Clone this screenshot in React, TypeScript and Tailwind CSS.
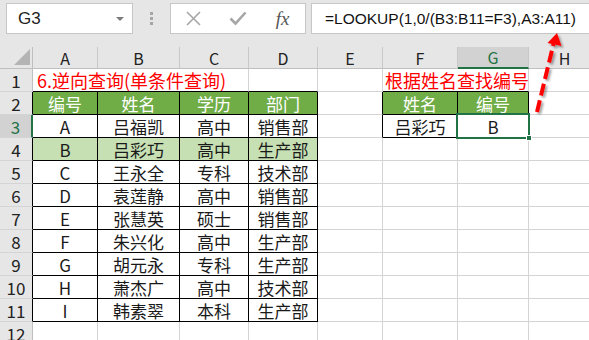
import type { ReactNode } from 'react'

type Edge = 'g' | 'k' | 'n'

const R: Record<Edge, string> = {
  g: 'border-r border-r-[#d4d4d4]',
  k: 'border-r border-r-black',
  n: '',
}
const B: Record<Edge, string> = {
  g: 'border-b border-b-[#d4d4d4]',
  k: 'border-b border-b-black',
  n: '',
}

function Cell({
  r = 'g',
  b = 'g',
  className = '',
  children,
}: {
  r?: Edge
  b?: Edge
  className?: string
  children?: ReactNode
}) {
  return (
    <div
      className={`box-border flex items-center justify-center whitespace-nowrap text-[17px] leading-none ${R[r]} ${B[b]} ${className}`}
    >
      {children}
    </div>
  )
}

function RowHead({ n, active = false, edge = 'g' }: { n: number; active?: boolean; edge?: Edge }) {
  if (active) {
    return (
      <div className="box-border flex items-center justify-center border-b border-b-[#d4d4d4] border-r-2 border-r-[#217346] bg-[#d2d2d2] text-[17px] leading-none text-[#217346]">
        {n}
      </div>
    )
  }
  return (
    <div
      className={`box-border flex items-center justify-center border-b border-b-[#d4d4d4] bg-[#e6e6e6] text-[17px] leading-none text-[#222] ${
        edge === 'k' ? 'border-r border-r-black' : 'border-r border-r-[#bfbfbf]'
      }`}
    >
      {n}
    </div>
  )
}

const people = [
  ['A', '吕福凯', '高中', '销售部'],
  ['B', '吕彩巧', '高中', '生产部'],
  ['C', '王永全', '专科', '技术部'],
  ['D', '袁莲静', '高中', '销售部'],
  ['E', '张慧英', '硕士', '销售部'],
  ['F', '朱兴化', '高中', '生产部'],
  ['G', '胡元永', '专科', '生产部'],
  ['H', '萧杰广', '高中', '技术部'],
  ['I', '韩素翠', '本科', '生产部'],
]

const letters = ['A', 'B', 'C', 'D', 'E', 'F', 'G', 'H']

export default function App() {
  return (
    <div className="relative h-[340px] w-[589px] overflow-hidden bg-white font-['Noto_Sans_CJK_SC',sans-serif] text-[#1a1a1a]">
      {/* formula bar */}
      <div className="flex h-[47px] items-start bg-[#e6e6e6] pl-[6px] pt-[3px]">
        <div className="box-border flex h-[31px] w-[127px] items-center justify-between border border-[#c6c6c6] bg-white pl-[11px] pr-[8px]">
          <span className="font-['Liberation_Sans',sans-serif] text-[17px] text-[#222]">G3</span>
          <span className="h-0 w-0 border-x-[4px] border-t-[4px] border-x-transparent border-t-[#7a7a7a]" />
        </div>
        <div className="flex h-[31px] w-[37px] flex-col items-center justify-center gap-[2px]">
          <span className="h-[3px] w-[3px] bg-[#a6a6a6]" />
          <span className="h-[3px] w-[3px] bg-[#a6a6a6]" />
          <span className="h-[3px] w-[3px] bg-[#a6a6a6]" />
        </div>
        <div className="box-border flex h-[31px] w-[136px] items-center border border-[#c6c6c6] bg-white">
          <div className="flex w-[45px] justify-center">
            <svg width="15" height="15" viewBox="0 0 15 15">
              <path d="M1 1 L14 14 M14 1 L1 14" stroke="#a6a6a6" strokeWidth="1.6" fill="none" />
            </svg>
          </div>
          <div className="flex w-[45px] justify-center">
            <svg width="18" height="15" viewBox="0 0 18 15">
              <path d="M1.5 7.5 L6.5 12.5 L16.5 1.5" stroke="#a6a6a6" strokeWidth="2.6" fill="none" />
            </svg>
          </div>
          <div className="flex w-[45px] justify-center font-['Liberation_Serif',serif] text-[19px] italic leading-none text-[#555]">
            fx
          </div>
        </div>
        <div className="-mr-[3px] ml-[5px] box-border flex h-[31px] flex-1 items-center border border-[#c6c6c6] bg-white pl-[13px] font-['Liberation_Sans',sans-serif] text-[15.5px] text-[#111]">
          =LOOKUP(1,0/(B3:B11=F3),A3:A11)
        </div>
      </div>

      {/* sheet */}
      <div className="grid grid-cols-[33px_65px_82px_69px_69px_65px_75px_71px_72px] grid-rows-[22px_repeat(12,23px)]">
        <div className="box-border flex items-end justify-end border-b border-r border-[#bfbfbf] bg-[#e6e6e6] pb-[3px] pr-[2px]">
          <svg width="16" height="16" viewBox="0 0 16 16">
            <polygon points="16,0 16,16 0,16" fill="#b4b4b4" />
          </svg>
        </div>
        {letters.map((l) =>
          l === 'G' ? (
            <div
              key={l}
              className="box-border flex items-center justify-center border-b-2 border-r border-b-[#217346] border-r-[#c8c8c8] bg-[#d2d2d2] text-[16px] leading-none text-[#217346]"
            >
              {l}
            </div>
          ) : (
            <div
              key={l}
              className="box-border flex items-center justify-center border-b border-r border-b-[#bfbfbf] border-r-[#c8c8c8] bg-[#e6e6e6] text-[16px] leading-none text-[#222]"
            >
              {l}
            </div>
          ),
        )}

        {/* row 1 */}
        <RowHead n={1} />
        <Cell b="k" className="col-span-3 justify-start pl-[4px] text-[18px] text-[#ff0000]">
          6.逆向查询(单条件查询)
        </Cell>
        <Cell b="k" />
        <Cell />
        <Cell b="k" className="col-span-2 pl-[3px] text-[18px] text-[#ff0000]">
          根据姓名查找编号
        </Cell>
        <Cell />

        {/* row 2 */}
        <RowHead n={2} edge="k" />
        {['编号', '姓名', '学历', '部门'].map((h) => (
          <Cell key={h} r="k" b="k" className="bg-[#70ad47] text-white">
            {h}
          </Cell>
        ))}
        <Cell r="k" />
        <Cell r="k" b="k" className="bg-[#70ad47] text-white">
          姓名
        </Cell>
        <Cell r="k" b="k" className="bg-[#70ad47] text-white">
          编号
        </Cell>
        <Cell />

        {/* rows 3 - 11 */}
        {people.map((p, i) => {
          const row = i + 3
          return [
            <RowHead key={`h${row}`} n={row} active={row === 3} edge="k" />,
            ...p.map((v, j) => (
              <Cell key={`c${row}-${j}`} r="k" b="k" className={row === 4 ? 'bg-[#c6e0b4]' : ''}>
                {v}
              </Cell>
            )),
            row === 3 ? (
              <Cell key={`e${row}`} r="k" />
            ) : (
              <Cell key={`e${row}`} />
            ),
            row === 3 ? (
              <Cell key={`f${row}`} r="k" b="k">
                吕彩巧
              </Cell>
            ) : (
              <Cell key={`f${row}`} />
            ),
            row === 3 ? (
              <Cell key={`g${row}`} r="k" b="k" className="relative">
                B
                <div className="absolute -bottom-[2px] -left-[2px] -right-[2px] -top-[2px] border-2 border-[#217346]" />
                <div className="absolute -bottom-[4px] -right-[4px] h-[6px] w-[6px] border border-white bg-[#217346]" />
              </Cell>
            ) : (
              <Cell key={`g${row}`} />
            ),
            <Cell key={`x${row}`} />,
          ]
        })}

        {/* row 12 */}
        <RowHead n={12} />
        {letters.map((l) => (
          <Cell key={`r12${l}`} />
        ))}
      </div>

      {/* callout arrow */}
      <svg className="pointer-events-none absolute left-0 top-0" width="589" height="340">
        <defs>
          <filter id="sh" x="-50%" y="-50%" width="200%" height="200%">
            <feDropShadow dx="2" dy="2" stdDeviation="1.2" floodColor="#000" floodOpacity="0.35" />
          </filter>
        </defs>
        <g filter="url(#sh)">
          <line x1="537" y1="112" x2="553.5" y2="44" stroke="#ff0000" strokeWidth="4" strokeDasharray="12 5" />
          <polygon points="557,33 561.5,46 547.5,43" fill="#ff0000" />
        </g>
      </svg>
    </div>
  )
}
